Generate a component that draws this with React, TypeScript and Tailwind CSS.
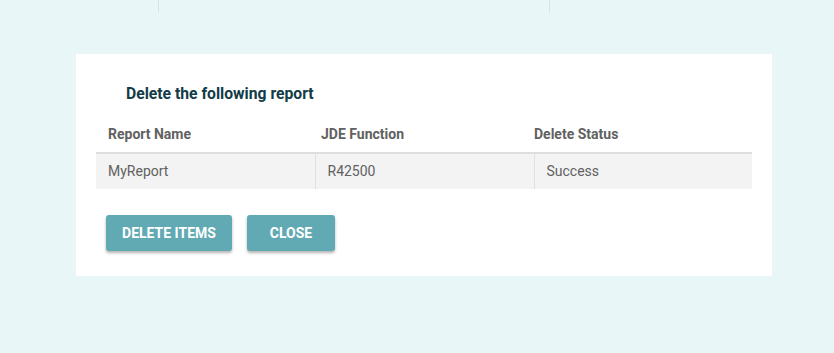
export default function App() {
  const rows = [{ name: "MyReport", fn: "R42500", status: "Success" }];

  return (
    <div className="relative h-[353px] w-[834px] overflow-hidden bg-[#e8f6f7] font-['Roboto',sans-serif]">
      {/* faint column lines from the page behind */}
      <div className="absolute left-[158px] top-0 h-[12px] w-px bg-[#d3e4e6]" />
      <div className="absolute left-[549px] top-0 h-[12px] w-px bg-[#d3e4e6]" />

      <div className="pt-[54px] pl-[76px]">
        <div className="w-[696px] bg-white px-[20px] pb-[25px] pt-[30px]">
          <h2 className="pl-[30px] text-[15.7px] font-bold leading-[19px] text-[#123c47]">
            Delete the following report
          </h2>

          <table className="mt-[13px] w-[656px] border-collapse text-[14px]">
            <thead>
              <tr className="h-[37px] border-b-2 border-[#dddddd] text-left">
                <th className="w-[219px] px-[12px] font-bold text-[#616161]">Report Name</th>
                <th className="w-[219px] px-[6px] font-bold text-[#616161]">JDE Function</th>
                <th className="px-0 font-bold text-[#616161]">Delete Status</th>
              </tr>
            </thead>
            <tbody>
              {rows.map((r) => (
                <tr key={r.name} className="h-[36px] bg-[#f3f3f3] text-[#616161]">
                  <td className="border-r border-[#e0e0e0] px-[12px]">{r.name}</td>
                  <td className="border-r border-[#e0e0e0] px-[12px]">{r.fn}</td>
                  <td className="px-[12px]">{r.status}</td>
                </tr>
              ))}
            </tbody>
          </table>

          <div className="mt-[26px] flex gap-[15px] pl-[10px]">
            <button className="h-[36px] w-[126px] rounded-[3px] bg-[#62aab3] text-[14px] font-bold uppercase text-white shadow-[0_2px_3px_rgba(0,0,0,0.3)]">
              Delete Items
            </button>
            <button className="h-[36px] w-[88px] rounded-[3px] bg-[#62aab3] text-[14px] font-bold uppercase text-white shadow-[0_2px_3px_rgba(0,0,0,0.3)]">
              Close
            </button>
          </div>
        </div>
      </div>
    </div>
  );
}
